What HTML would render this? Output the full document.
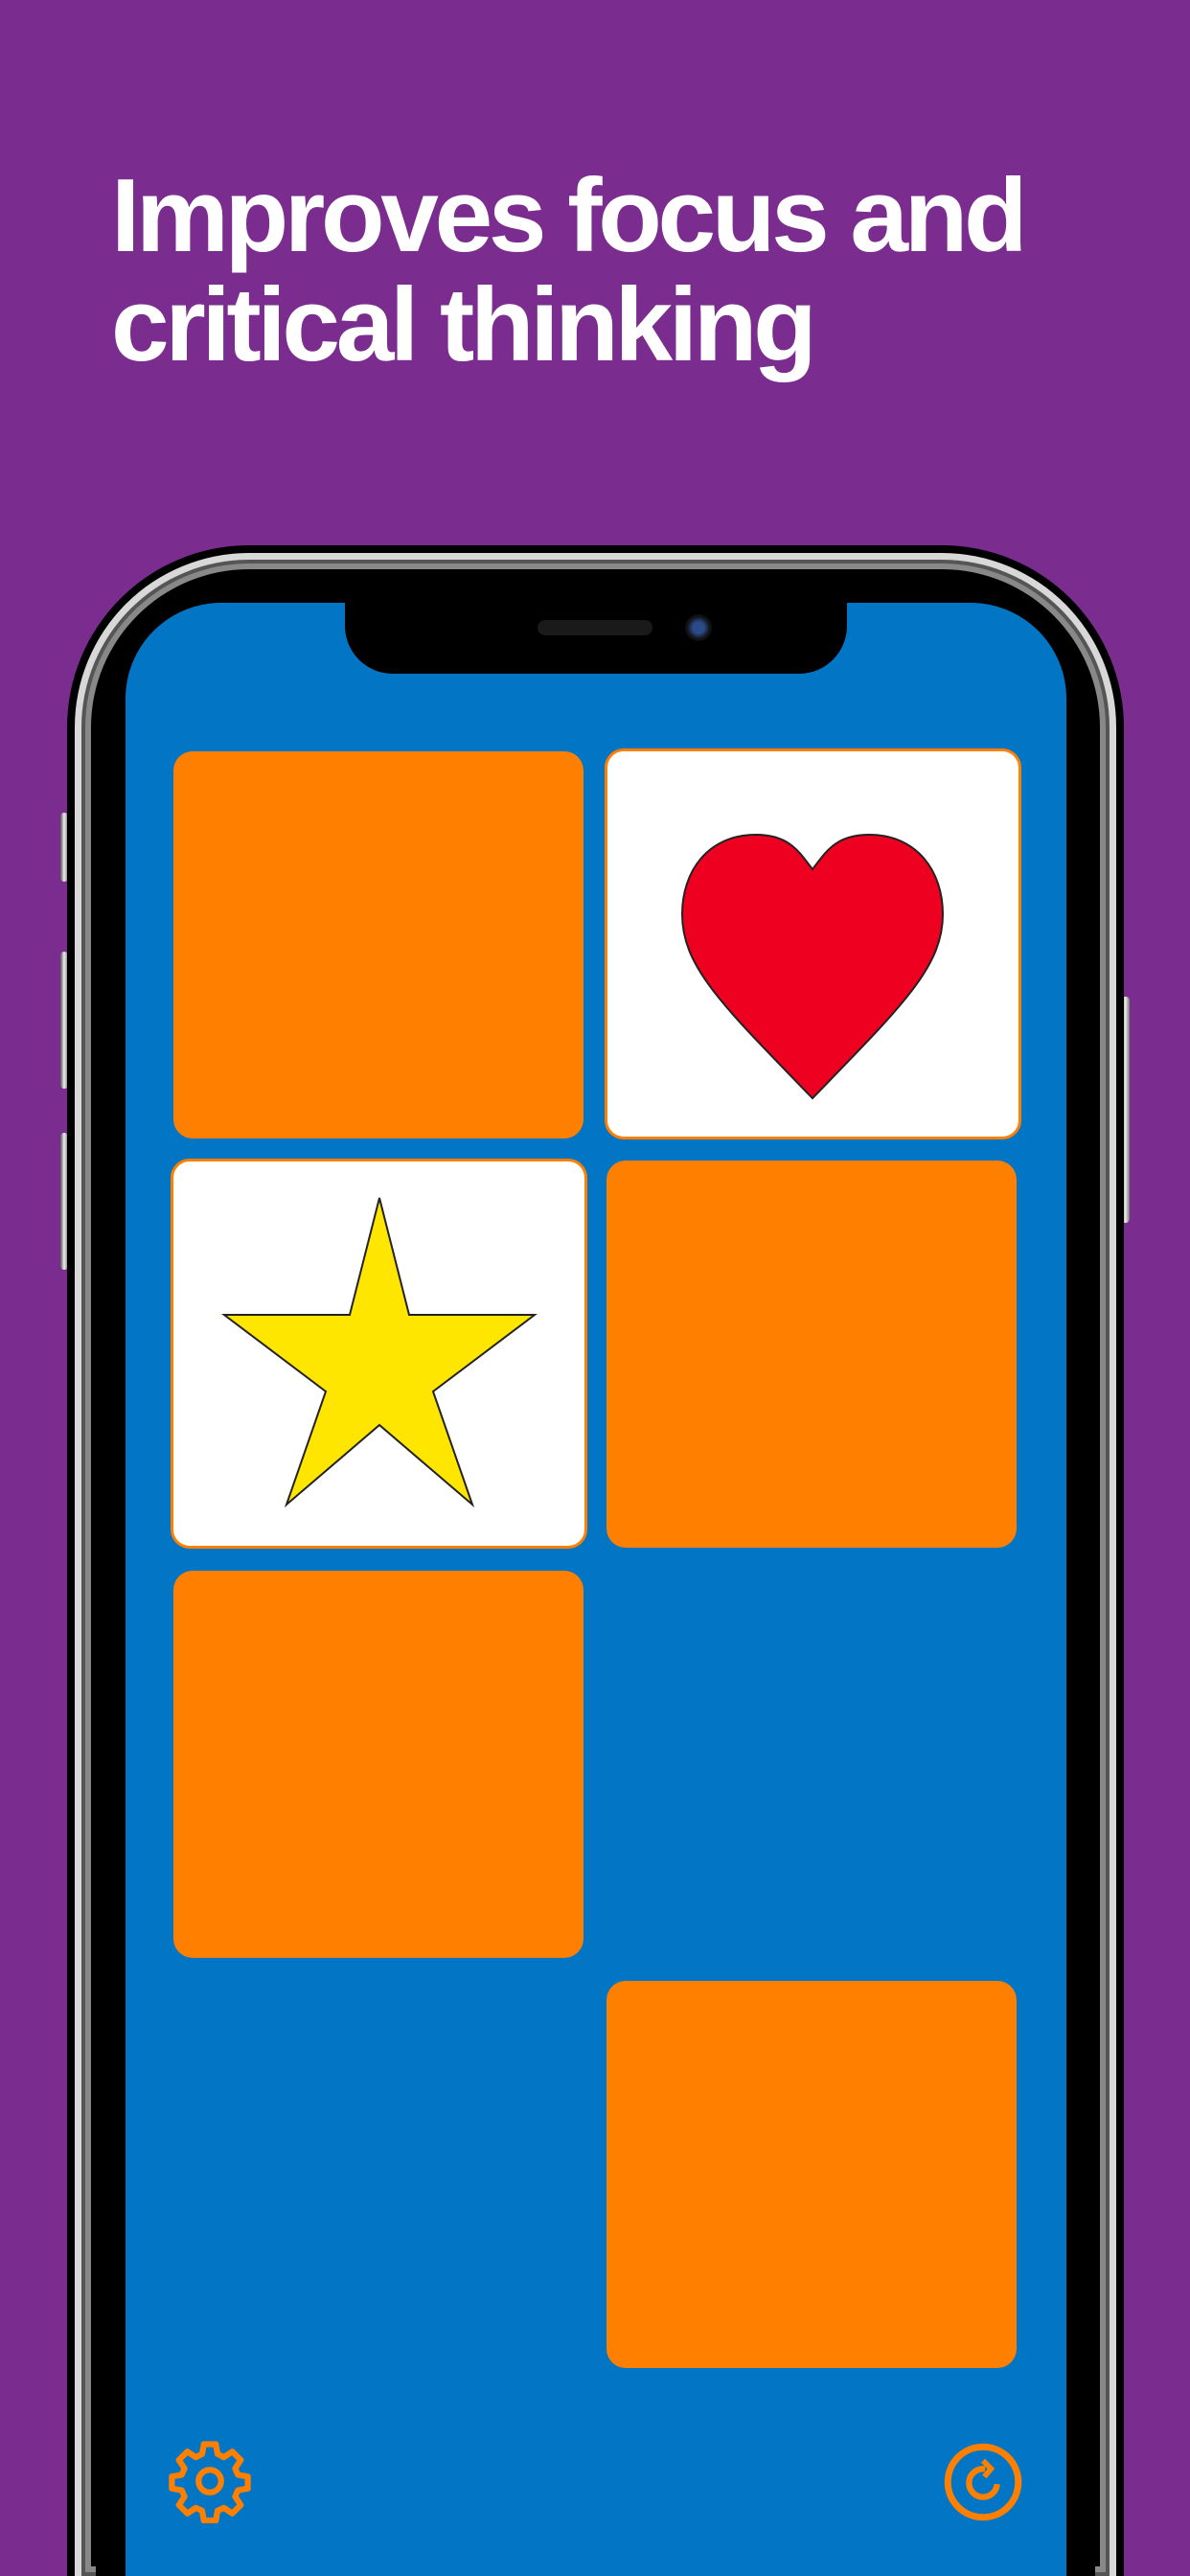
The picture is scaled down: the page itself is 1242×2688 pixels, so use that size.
<!DOCTYPE html>
<html><head><meta charset="utf-8">
<style>
html,body{margin:0;padding:0;width:1242px;height:2688px;overflow:hidden}
body{background:#7a2d8e;font-family:"Liberation Sans",sans-serif}
#w{position:relative;width:1242px;height:2688px;overflow:hidden;background:#7a2d8e}
h1{position:absolute;left:116px;top:168px;margin:0;color:#fff;font-weight:bold;font-size:109px;line-height:114px;letter-spacing:-4.3px}
.btn{position:absolute;background:linear-gradient(90deg,#555,#eee,#777);border-radius:4px}
.frame{position:absolute;left:70px;top:569px;width:1103px;height:2119px;border-radius:190px 190px 0 0;background:#000;}
.rim{position:absolute;left:78px;top:577px;width:1087px;height:2111px;border-radius:182px 182px 0 0;border:7px solid #d8d8d8;border-bottom:0;box-sizing:border-box;box-shadow:inset 0 0 0 4px #555, inset 0 0 0 10px #888}
.inner{position:absolute;left:100px;top:598px;width:1043px;height:2090px;border-radius:160px 160px 0 0;background:#000}
.screen{position:absolute;left:131px;top:629px;width:982px;height:2059px;border-radius:100px 100px 0 0;background:#0275c4;overflow:hidden}
.notch{position:absolute;left:229px;top:-10px;width:524px;height:84px;background:#000;border-radius:0 0 50px 50px}
.spk{position:absolute;left:201px;top:28px;width:120px;height:16px;border-radius:8px;background:#1a1a1a}
.cam{position:absolute;left:355px;top:22px;width:28px;height:28px;border-radius:50%;background:radial-gradient(#2a4a8a 30%,#111 60%)}
.card{position:absolute;width:428px;height:404px;border-radius:20px;background:#ff8000}
.white{background:#fff;border:3px solid #ff8000;box-sizing:border-box}
</style></head><body><div id="w">
<h1>Improves focus and<br>critical thinking</h1>
<div class="btn" style="left:63px;top:848px;width:8px;height:72px"></div>
<div class="btn" style="left:63px;top:993px;width:8px;height:143px"></div>
<div class="btn" style="left:63px;top:1182px;width:8px;height:143px"></div>
<div class="btn" style="left:1170px;top:1040px;width:9px;height:236px"></div>
<div class="frame"></div>
<div class="rim"></div>
<div class="inner"></div>
<div class="screen">
  <div class="notch"><div class="spk"></div><div class="cam"></div></div>
</div>
<div class="card" style="left:181px;top:784px"></div>
<div class="card white" style="left:631px;top:781px;width:435px;height:408px">
  <svg width="429" height="402" viewBox="0 0 429 402" style="position:absolute;left:0;top:0">
    <path d="M214 123 C200 105 190 87 155 87 C105 87 78 125 78 170 C78 225 120 265 214 362 C308 265 350 225 350 170 C350 125 323 87 273 87 C238 87 228 105 214 123 Z" fill="#ee0020" stroke="#222" stroke-width="2"/>
  </svg>
</div>
<div class="card white" style="left:178px;top:1209px;width:435px;height:407px">
  <svg width="429" height="401" viewBox="0 0 429 401" style="position:absolute;left:0;top:0">
    <path d="M215 38 L246 160 L377 160 L271 240 L312 358 L215 275 L118 358 L159 240 L53 160 L184 160 Z" fill="#ffe600" stroke="#222" stroke-width="2"/>
  </svg>
</div>
<div class="card" style="left:633px;top:1211px"></div>
<div class="card" style="left:181px;top:1639px"></div>
<div class="card" style="left:633px;top:2067px"></div>
<svg style="position:absolute;left:175px;top:2545px" width="88" height="88" viewBox="0 0 24 24" fill="none" stroke="#ff8000" stroke-width="1.7" stroke-linejoin="round">
  <path d="M10.3 1.5h3.4l.5 2.8 1.8.9 2.4-1.6 2.4 2.4-1.6 2.4.8 1.8 2.8.5v3.4l-2.8.5-.8 1.8 1.6 2.4-2.4 2.4-2.4-1.6-1.8.8-.5 2.8h-3.4l-.5-2.8-1.8-.8-2.4 1.6-2.4-2.4 1.6-2.4-.8-1.8-2.8-.5v-3.4l2.8-.5.8-1.8-1.6-2.4 2.4-2.4 2.4 1.6 1.800-.9z"/>
  <circle cx="12" cy="12" r="3.2"/>
</svg>
<svg style="position:absolute;left:984px;top:2548px" width="84" height="84" viewBox="0 0 24 24" fill="none" stroke="#ff8000" stroke-width="2">
  <circle cx="12" cy="12" r="10.5"/>
  <path d="M16.2 12.6a4.2 4.2 0 1 1-3.6-4.5" stroke-width="1.8"/>
  <path d="M12 5.6l2.4 2.4-2 2.4" stroke-width="1.6"/>
</svg>
</div></body></html>
